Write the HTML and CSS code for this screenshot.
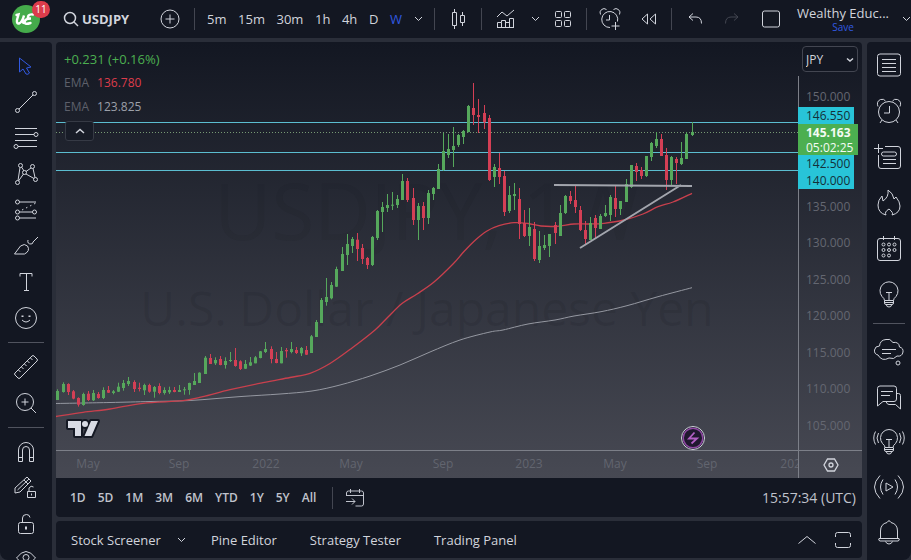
FILE: index.html
```html
<!DOCTYPE html>
<html lang="en">
<head>
<meta charset="utf-8">
<title>USDJPY</title>
<link rel="stylesheet" href="styles.css">
</head>
<body>
<header class="topbar">
  <button class="logo" aria-label="Account">
    <svg width="52" height="38" viewBox="0 0 52 38"><circle cx="26" cy="19" r="14" fill="#45ab4b"/><path d="M16.500 15l2-.5-1.500 5.500q-.5 4 2 3.500 3-1 5-8l-1.500 5q0 3 2.500 2.500M33 14.500q-4-.5-5 2-1 2 3 2-6 0-6.500 3.500 0 3 6 1" fill="none" stroke="#fff" stroke-width="2.400" stroke-linecap="round"/></svg>
    <span class="badge">11</span>
  </button>
  <button class="symbol"><svg width="16" height="16" viewBox="0 0 16 16"><circle cx="7" cy="7" r="5.5"/><path d="M11 11l4 4"/></svg>USDJPY</button>
  <button class="w48" aria-label="Compare"><svg width="20" height="20" viewBox="0 0 20 20"><circle cx="10" cy="10" r="9"/><path d="M10 5.500v9M5.500 10h9"/></svg></button>
  <span class="vsep"></span>
  <nav class="frames">
    <button>5m</button><button>15m</button><button>30m</button><button>1h</button><button>4h</button><button>D</button><button class="on">W</button>
  </nav>
  <button class="w32" aria-label="More intervals"><svg width="9" height="6" viewBox="0 0 9 6"><path d="M1 1l3.500 3.500L8 1"/></svg></button>
  <span class="vsep"></span>
  <button class="w46" aria-label="Chart style"><svg width="16" height="22" viewBox="0 0 16 22"><path d="M2.500 4.500h4v13h-4zM4.500 1v3.500M4.500 17.500V21M10.500 7.500h4v7h-4zM12.500 4v3.500M12.500 14.500V18"/></svg></button>
  <span class="vsep"></span>
  <button class="w48" aria-label="Indicators"><svg width="20" height="20" viewBox="0 0 20 20"><path d="M1 8l5-5 5 4 7-6M1.500 18.500v-5h4v5m0-5v-2h4v7m0-5h4m0-4h4v9.500M13.500 18.500v-9M1 18.500h17"/></svg></button>
  <button class="w10" aria-label="Indicator templates"><svg width="9" height="6" viewBox="0 0 9 6"><path d="M1 1l3.500 3.500L8 1"/></svg></button>
  <button class="w46" aria-label="Layouts"><svg width="18" height="18" viewBox="0 0 18 18"><rect x="1.500" y="1.500" width="6" height="6" rx="1"/><rect x="10.500" y="1.500" width="6" height="6" rx="1"/><rect x="1.500" y="10.500" width="6" height="6" rx="1"/><rect x="10.500" y="10.500" width="6" height="6" rx="1"/></svg></button>
  <span class="vsep"></span>
  <button class="w46" aria-label="Alert"><svg width="22" height="22" viewBox="0 0 22 22"><path d="M11 19.500a8 8 0 1 1 7.500-6M10.500 7v5H7M1.500 6.500a4 4 0 0 1 6-5M14.500 1.500a4 4 0 0 1 6 5M16.500 14v8M12.500 18h8"/></svg></button>
  <button class="w32" aria-label="Replay"><svg width="18" height="14" viewBox="0 0 18 14"><path d="M7.500 2v10L2 7zM15.500 2v10L10 7z"/></svg></button>
  <span class="vsep rewind-end"></span>
  <button class="w46" aria-label="Undo"><svg width="16" height="14" viewBox="0 0 16 14"><path d="M6 1.500L2 5l4 3.500M2 5h7q5.500 0 5.500 6.500"/></svg></button>
  <button class="w28 dim" aria-label="Redo"><svg width="16" height="14" viewBox="0 0 16 14"><path d="M10 1.500L14 5l-4 3.500M14 5H7Q1.500 5 1.500 11.500"/></svg></button>
  <button class="w50" aria-label="Select layout"><svg width="20" height="18" viewBox="0 0 20 18"><rect x="1.500" y="1" width="17" height="16" rx="2"/></svg></button>
  <button class="title"><span class="name">Wealthy Educ...</span><span class="save">Save</span></button>
  <button class="w32" aria-label="Manage layouts"><svg width="9" height="6" viewBox="0 0 9 6"><path d="M1 1l3.500 3.500L8 1"/></svg></button>
</header>

<div class="work">
  <aside class="tools">
    <button class="on" aria-label="Cursor"><svg width="24" height="24" viewBox="0 0 24 24"><path d="M5.500 4v14l3.500-3 3 5q2 1 3.500-1l-3-5 4.500-1z"/></svg></button>
    <button aria-label="Trend line"><svg width="24" height="24" viewBox="0 0 24 24"><circle cx="3.500" cy="20.500" r="2"/><circle cx="20.500" cy="3.500" r="2"/><path d="M5 19L19 5"/></svg></button>
    <button aria-label="Fib retracement"><svg width="26" height="24" viewBox="0 0 26 24"><circle cx="23" cy="8.500" r="2"/><circle cx="3" cy="20.500" r="2"/><path d="M2 2.500h22M2 8.500h19M2 14.500h22M5 20.500h19"/></svg></button>
    <button aria-label="Patterns"><svg width="24" height="24" viewBox="0 0 24 24"><circle cx="6.500" cy="3.500" r="2"/><circle cx="18.500" cy="4.500" r="2"/><circle cx="10.500" cy="10.500" r="2"/><circle cx="3.500" cy="20.500" r="2"/><circle cx="21.500" cy="17.500" r="2"/><path d="M6 5.500L4 18.500M7.500 5L10 9M17 6l-5 3.500M19 6.500l2 9M12 12l8 4.500M9.500 12l-5 7"/></svg></button>
    <button aria-label="Projection"><svg width="24" height="24" viewBox="0 0 24 24"><circle cx="3.500" cy="4" r="2"/><circle cx="3.500" cy="14" r="2"/><circle cx="20.500" cy="14" r="2"/><circle cx="3.500" cy="20" r="2"/><path d="M5.500 4H22M5.500 14h13M5.500 20H22"/><path d="M8 12L22 5" stroke-dasharray="1.500 3"/></svg></button>
    <button aria-label="Brush"><svg width="26" height="24" viewBox="0 0 26 24"><path d="M1.500 20l6-8q4-3 7 0 3 5-3 8zM15 6q-1 4 3 4 2 0 2-2l5-5"/></svg></button>
    <button aria-label="Text"><svg width="24" height="24" viewBox="0 0 24 24"><path d="M6 6.500v-3h12v3M12.500 3.500v17M10 20.500h5"/></svg></button>
    <button aria-label="Emoji"><svg width="24" height="24" viewBox="0 0 24 24"><circle cx="12" cy="12" r="10.500"/><path d="M8 14q4 4 8 0"/><path d="M8.500 9.500v1.500M15.500 9.500v1.500" stroke-width="2"/></svg></button>
    <hr>
    <button aria-label="Measure"><svg width="26" height="26" viewBox="0 0 26 26"><path d="M2 19L19 2q1-1 2 0l3 3q1 1 0 2L7 24q-1 1-2 0l-3-3q-1-1 0-2zM5.500 16l2 2M8.500 13l2 2M11.500 10l2 2M14.500 7l2 2M17.500 4l2 2"/></svg></button>
    <button aria-label="Zoom in"><svg width="24" height="24" viewBox="0 0 24 24"><circle cx="11" cy="11" r="8.500"/><path d="M17 17l5 5M11 7.500v7M7.500 11h7"/></svg></button>
    <hr>
    <button aria-label="Magnet"><svg width="24" height="24" viewBox="0 0 24 24"><path d="M4.500 21.500V10a7.500 7.500 0 0 1 15 0v11.500h-4V10a3.500 3.500 0 0 0-7 0v11.500zM4.500 17.500h4M15.500 17.500h4"/></svg></button>
    <button aria-label="Keep drawing"><svg width="26" height="26" viewBox="0 0 26 26"><path d="M2 13L14 2l4 4L7 17l-5 1zM4.500 15L16 4M11 5l4 4M14.500 16.500h8v6h-8zM16 16v-3q2-3 4.500-1M18.500 18.500v2"/></svg></button>
    <button aria-label="Lock drawings"><svg width="24" height="24" viewBox="0 0 24 24"><rect x="4.500" y="10.500" width="15" height="11" rx="2"/><path d="M8.500 10.500V6q0-3.500 4-3.500 3 0 3.500 3"/><path d="M12 14.500v3" stroke-width="2"/></svg></button>
    <button aria-label="Hide drawings"><svg width="24" height="24" viewBox="0 0 24 24"><path d="M2.500 10Q12-3 21.500 10 12 22 2.500 10z"/><circle cx="12" cy="9.500" r="3"/></svg></button>
  </aside>

  <main class="center">
    <section class="chart">
      <div class="plot">
        <div class="watermark"><span class="wm-symbol">USDJPY, 1W</span><span class="wm-name">U.S. Dollar / Japanese Yen</span></div>
        <svg class="canvas" viewBox="56 42 742 408" preserveAspectRatio="none">
          <g stroke="#5bbdd0"><path d="M56 122.500H798M56 152.500H798M56 170.500H798"/></g>
          <path d="M56 132.500H798" stroke="#769873" stroke-dasharray="1 2"/>
          <path id="slow" stroke="#9598a1" fill="none"/>
          <path id="fast" stroke="#c9404d" stroke-width="1.300" fill="none"/>
          <g id="candles"></g>
          <path d="M554 185l138 1M580 248l101-63" stroke="#a2a5ad" stroke-width="2"/>
        </svg>
        <div class="legend">
          <div class="change">+0.231 (+0.16%)</div>
          <div><span class="ema">EMA</span><span class="red">136.780</span></div>
          <div><span class="ema">EMA</span><span class="gray">123.825</span></div>
          <button class="collapse" aria-label="Collapse legend"><svg width="10" height="6" viewBox="0 0 10 6"><path d="M1 5l4-3.500L9 5" stroke-width="1.500"/></svg></button>
        </div>
        <svg class="mark" width="34" height="22" viewBox="0 0 34 22"><g stroke="#151924" stroke-width="4" stroke-linejoin="round" fill="#151924"><path d="M2 2h13v15H9V9H2zM25 2h7l-6.500 15h-7z"/><circle cx="19" cy="5" r="3"/></g><path d="M2 2h13v15H9V9H2zM25 2h7l-6.500 15h-7z" fill="#d8dbe4"/><circle cx="19" cy="5" r="3" fill="#d8dbe4"/></svg>
        <svg class="event" width="24" height="24" viewBox="0 0 24 24"><circle cx="12" cy="12" r="11.500" fill="#171b27"/><circle cx="12" cy="12" r="9.800" fill="#20182f" stroke="#8e48a2" stroke-width="1.500"/><path d="M13.500 6.500L8 12.500h8l-5.500 5" fill="none" stroke="#b25fc4" stroke-width="1.800"/></svg>
      </div>
      <div class="axis" id="prices">
        <select class="currency" aria-label="Currency"><option>JPY</option></select>
        <svg class="select-arrow" width="8" height="6" viewBox="0 0 8 6"><path d="M1 1.500l3 2.500 3-2.500" stroke-width="1.500"/></svg>
        <div class="tags">
          <span>146.550</span>
          <span class="last"><b>145.163</b>05:02:25</span>
          <span>142.500</span>
          <span>140.000</span>
        </div>
      </div>
      <div class="times" id="times"></div>
      <button class="gear" aria-label="Chart settings"><svg width="16" height="14" viewBox="0 0 16 14"><path d="M4.500 1h7L15 7l-3.500 6h-7L1 7z"/><circle cx="8" cy="7" r="2"/></svg></button>
    </section>

    <section class="ranges">
      <button>1D</button><button>5D</button><button>1M</button><button>3M</button><button>6M</button><button>YTD</button><button>1Y</button><button>5Y</button><button>All</button>
      <span class="vsep"></span>
      <button aria-label="Go to date"><svg width="20" height="20" viewBox="0 0 20 20"><path d="M1.500 8V5q0-2 2-2h13q2 0 2 2v11q0 2-2 2h-6M1.500 7.500h17M5.500 1v4M14.500 1v4M1 13.500h9M7 10.500l3 3-3 3"/></svg></button>
      <span class="clock">15:57:34 (UTC)</span>
    </section>

    <footer class="tabs">
      <button class="screener">Stock Screener<svg width="9" height="6" viewBox="0 0 9 6"><path d="M1 1l3.500 3.500L8 1"/></svg></button>
      <button>Pine Editor</button><button>Strategy Tester</button><button>Trading Panel</button>
      <button class="push" aria-label="Expand panel"><svg width="20" height="10" viewBox="0 0 20 10"><path d="M1.500 8.500L10 1.500l8.500 7"/></svg></button>
      <button aria-label="Maximize panel"><svg width="18" height="18" viewBox="0 0 18 18"><path d="M1.500 6V3.500q0-2 2-2h11q2 0 2 2V6M1.500 12v2.500q0 2 2 2h11q2 0 2-2V12"/></svg></button>
    </footer>
  </main>

  <aside class="side">
    <button aria-label="Watchlist"><svg width="26" height="26" viewBox="0 0 26 26"><rect x="1.500" y="2" width="23" height="22" rx="2.500"/><path d="M6 7.500h14M6 11.500h14M6 15.500h14M6 19.500h14"/></svg></button>
    <button aria-label="Alerts"><svg width="28" height="28" viewBox="0 0 28 28"><circle cx="14" cy="15" r="10.500"/><path d="M14.500 9v7H9M3 9.500q-2-5 2.500-7Q9 1.500 10.500 4M25 9.500q2-5-2.500-7Q19 1.500 17.500 4M7 23l-2 3M21 23l2 3"/></svg></button>
    <button class="shift" aria-label="Data window"><svg width="30" height="30" viewBox="0 0 30 30"><path d="M5.500 2v9M1 6.500h9M12 4.500h13q2.500 0 2.500 2.500v17q0 2.500-2.500 2.500H8q-2.500 0-2.500-2.500V13M10 17.500h13M10 21.500h13"/><rect x="8.500" y="10" width="15" height="4" rx="2"/></svg></button>
    <button aria-label="Hotlists"><svg width="26" height="28" viewBox="0 0 26 28"><path d="M10 26Q2 24 2 16q0-5 4-9l1 5q6-4 5-11 5 3 6 9l2-2q4 5 4 9 0 7-8 9 2-2-3-6-5 3-3 6z"/></svg></button>
    <button aria-label="Calendar"><svg width="26" height="28" viewBox="0 0 26 28"><rect x="1.500" y="3.500" width="23" height="22" rx="2.500"/><path d="M7.500 1v4M18.500 1v4"/><g><circle cx="7.500" cy="9.500" r="1.500"/><circle cx="13" cy="9.500" r="1.500"/><circle cx="18.500" cy="9.500" r="1.500"/><circle cx="7.500" cy="15" r="1.500"/><circle cx="13" cy="15" r="1.500"/><circle cx="18.500" cy="15" r="1.500"/><circle cx="7.500" cy="20.500" r="1.500"/><circle cx="13" cy="20.500" r="1.500"/></g></svg></button>
    <button aria-label="Ideas"><svg width="24" height="28" viewBox="0 0 24 28"><path d="M7.500 19.500q0-2-2.500-4a9 9 0 1 1 14 0q-2.500 2-2.500 4zM7.500 19.500V22q0 1.500 1.500 1.500h6q1.500 0 1.500-1.500v-2.500M9.500 24q0 2 2.500 2t2.500-2M9 11.500h6M12 11.500v8M7.500 21.500h9"/></svg></button>
    <hr>
    <div class="social">
      <button aria-label="Minds"><svg width="32" height="30" viewBox="0 0 32 30"><path d="M5 18q-4-1-3.500-5Q2 9 6.500 9 7 3 13 2.500 17 1 20 5.500q6-1 6.500 4.500 4 1 3.500 5-1 5-6 4-3 4-8 2-7 4-11-3zM9 12.500h14M9 16.500h9"/><circle cx="25" cy="26" r="2"/></svg></button>
      <button aria-label="Chats"><svg width="26" height="28" viewBox="0 0 26 28"><path d="M1.500 23V5.500q0-2.500 2.500-2.500h14q2.500 0 2.500 2.500V16q0 2.500-2.500 2.500H7zM21 10.500h1.500q2 0 2 2V26l-5-4.500H13q-2 0-3-3M5 8.500h12M5 12.500h9"/></svg></button>
      <button aria-label="Idea stream"><svg width="32" height="28" viewBox="0 0 32 28"><path d="M12 19.500q0-2-2.500-4a8.500 8.500 0 1 1 13 0q-2.500 2-2.500 4zM11.500 19.500V22q0 1.500 1.500 1.500h6q1.500 0 1.500-1.500v-2.500M13.500 24q0 2 2.500 2t2.500-2M13 11.500h6M16 11.500v8M11.500 21.500h9M5.500 5q-3 5 0 10M2.500 3.500q-3.500 6.500 0 13M26.500 5q3 5 0 10M29.500 3.500q3.500 6.500 0 13"/></svg></button>
      <button aria-label="Streams"><svg width="32" height="28" viewBox="0 0 32 28"><path d="M13 10v8l7-4zM10 6.500q-5 7.500 0 15M7 2.500q-11 11.500 0 23M22 6.500q5 7.500 0 15M25 2.500q11 11.500 0 23"/></svg></button>
      <button aria-label="Notifications"><svg width="24" height="28" viewBox="0 0 24 28"><path d="M3.500 20.500V13q0-7 6.500-8.500 2-3.500 4 0Q20.500 6 20.500 13v7.500M2 20.500h20q1 2-1 2.500H3q-2-.5-1-2.500zM8.500 23.500q1 2.500 3.500 2.500t3.500-2.500"/></svg></button>
    </div>
  </aside>
</div>
<script src="chart.js"></script>
</body>
</html>
```
FILE: styles.css
```css
* { box-sizing: border-box; }
body {
  margin: 0;
  height: 100vh;
  overflow: hidden;
  display: flex;
  flex-direction: column;
  gap: 4px;
  background: #2a2e39;
  color: #d1d4dc;
  font: 13px/18px "Open Sans", "Noto Sans", sans-serif;
}
button {
  display: flex;
  align-items: center;
  justify-content: center;
  flex: none;
  margin: 0;
  padding: 0;
  border: 0;
  background: none;
  color: inherit;
  font: inherit;
  white-space: nowrap;
}
svg { flex: none; fill: none; stroke: currentColor; overflow: visible; }
hr { flex: none; margin: 6px 8px; border: 0; height: 1px; background: #50535e; }

.topbar, .tools, .side, .ranges, .tabs { background: #131722; }
.topbar { display: flex; align-items: center; height: 38px; flex: none; overflow: hidden; }
.vsep { width: 1px; height: 22px; background: #434651; flex: none; }
.logo { position: relative; width: 52px; height: 38px; }
.logo svg { stroke: none; }
.badge {
  position: absolute; left: 32px; top: 1px;
  width: 18px; height: 17px; border-radius: 9px;
  background: #dd3c4b; color: #fff; font-size: 10px; line-height: 17px;
}
.symbol { width: 94px; padding-left: 11px; gap: 3px; justify-content: flex-start; font-weight: 700; }
.symbol svg { stroke-width: 1.5; }
.w10 { width: 10px; }
.w28 { width: 28px; }
.w32 { width: 32px; }
.w46 { width: 46px; }
.w48 { width: 48px; }
.w50 { width: 50px; }
.frames { display: flex; justify-content: space-between; width: 207px; padding-left: 12px; flex: none; font-weight: 500; }
.on { color: #3159e0; }
.dim { color: #434651; }
.title { flex-direction: column; align-items: center; width: 94px; }
.name { line-height: 18px; }
.save { font-size: 10px; line-height: 14px; margin-top: -2px; color: #3159e0; }
.rewind-end { margin-left: 6px; }

.work { display: grid; grid-template-columns: 52px minmax(0, 1fr) 44px; column-gap: 4px; flex: 1; min-height: 0; }
.tools { display: flex; flex-direction: column; padding-top: 6px; overflow: hidden; border-radius: 0 4px 0 8px; }
.tools button { height: 36px; }
.side { display: flex; flex-direction: column; overflow: hidden; border-radius: 4px 0 8px 0; }
.side button { height: 46px; }
.side hr { margin: 5px 6px; }
.side .social button { width: 100%; height: 45px; }
.side .shift { padding-right: 3px; }

.center { display: flex; flex-direction: column; min-width: 0; min-height: 0; padding-right: 1px; }
.chart {
  flex: 1; min-height: 0;
  display: grid;
  grid-template-columns: minmax(0, 1fr) 64px;
  grid-template-rows: minmax(0, 1fr) 28px;
  background: linear-gradient(#131722, #474953);
  border-radius: 4px 4px 0 0;
  overflow: hidden;
}
.plot, .axis { position: relative; overflow: hidden; }
.canvas { position: absolute; inset: 0; width: 100%; height: 100%; }
.watermark {
  position: absolute; inset: 0;
  display: flex; flex-direction: column; align-items: center; justify-content: center;
  color: rgba(10, 12, 20, .1);
  white-space: nowrap;
}
.wm-symbol { font-size: 78px; line-height: 124px; color: rgba(10, 12, 20, .06); }
.wm-name { font-size: 48px; line-height: 72px; }
.legend { position: absolute; left: 8px; top: 5px; font-size: 12px; line-height: 24px; }
.change { color: #4caf50; font-size: 13px; }
.ema { color: #5d606b; margin-right: 8px; }
.red { color: #dd3c4b; }
.gray { color: #9da0a9; }
.collapse { width: 29px; height: 20px; margin: 2px 0 0 1px; border: 1px solid #363a45; border-radius: 3px; background: #181c27; }
.mark { position: absolute; left: 10px; bottom: 9px; stroke: none; }
.event { position: absolute; left: 85.8%; bottom: 0; transform: translateX(-50%); }

.axis { font-size: 12px; line-height: 16px; }
.axis::before { content: ""; position: absolute; left: 0; top: 34px; bottom: 0; width: 1px; background: #7c7f88; }
.currency {
  position: absolute; left: 4px; top: 4px; width: 56px; height: 26px;
  appearance: none; background: #131722; color: #d1d4dc;
  border: 1px solid #434651; border-radius: 4px; padding: 0 3px;
  font: 12px "Open Sans", "Noto Sans", sans-serif;
}
.select-arrow { position: absolute; right: 8px; top: 15px; }
.price { position: absolute; left: 8px; transform: translateY(-50%); color: #646771; }
.tags { position: absolute; left: 0; top: 65px; display: flex; flex-direction: column; align-items: flex-start; color: #143039; }
.tags span { width: 56px; padding-left: 8px; line-height: 17px; background: #28c4d8; }
.tags .last { width: 60px; background: #4caf50; color: #f4fbf4; line-height: 15px; padding: 1px 0 0 8px; }
.last b { display: block; }

.times { position: relative; overflow: hidden; border-top: 1px solid #7c7f88; border-right: 1px solid #7c7f88; margin-right: -1px; }
.time { position: absolute; top: 5px; transform: translateX(-50%); font-size: 12px; line-height: 16px; color: #62656f; }
.gear { border-top: 1px solid #7c7f88; padding-left: 2px; }
.gear svg { stroke-width: 1.3; }

.ranges {
  display: flex; align-items: center; gap: 12px; height: 39px; flex: none;
  padding: 0 6px 0 14px; margin-bottom: 4px; border-radius: 0 0 4px 4px;
  font-size: 12px; font-weight: 600; color: #c0c3cc;
}
.ranges .vsep { margin-left: 4px; }
.clock { margin-left: auto; font-size: 14px; font-weight: 500; }
.tabs {
  display: flex; align-items: center; gap: 33px; height: 37px; flex: none;
  padding: 0 10px 0 15px; margin-bottom: 2px; border-radius: 4px; font-weight: 500;
}
.screener { gap: 16px; margin-right: -8px; }
.push { margin-left: auto; margin-right: -16px; }
```
FILE: chart.js
```js
const UP = "#56a85c", DOWN = "#d43f55";
// Each bar: x, high, low, body top, body bottom, direction (1 up, 0 down), in thirds of a unit from the origin.
const segments = [
  { origin: [50, 220], bars: [
    [22,508,540,513,540,1],[40,487,518,492,516,1],[55,490,525,492,516,0],[70,510,538,514,536,0],[85,532,560,534,554,0],
    [100,518,557,522,555,1],[115,513,543,521,540,0],[130,510,543,519,541,1],[145,516,536,522,534,0],[160,502,537,510,534,1],
    [175,498,519,510,518,0],[190,510,523,514,519,1],[205,488,516,500,515,1],[220,480,512,489,504,1],[235,471,498,483,492,1],
    [253,481,516,486,507,0],[268,488,514,503,507,0],[283,491,525,495,511,1],[298,491,518,495,515,0],[313,498,533,501,515,1],
    [328,490,523,498,519,0],[343,502,524,510,519,1],[358,500,522,510,517,1],[373,501,517,510,516,0],[388,495,516,510,516,1],
    [403,501,524,508,511,1],[418,488,524,489,510,1],[433,459,495,483,495,1],[448,457,489,458,489,1],[466,408,462,413,462,1],
    [481,402,432,414,432,0],[496,412,435,420,430,1],[511,408,436,417,435,0],[526,412,446,423,435,1],[541,396,426,420,423,1],
    [556,384,440,420,438,0],[571,421,450,424,447,0],[586,420,447,432,446,1],[601,411,438,427,437,1],[616,408,430,412,430,1],
    [631,393,415,394,414,1],[646,366,399,387,396,1],[664,379,430,387,417,0],[679,396,430,417,429,0],[694,381,430,393,430,1],
    [709,384,413,390,394,0],[724,366,400,387,396,1],[739,381,402,390,399,0],[754,381,408,384,400,1],[769,378,405,390,404,0],
    [784,345,399,349,399,1],[799,300,351,306,351,1],[814,234,309,240,309,1],[829,174,257,231,246,1],[844,186,238,195,235,1],
    [859,140,201,147,200,1]] },
  { origin: [310, 70], bars: [
    [97,531,603,552,603,1],[112,492,585,522,555,1],[127,501,549,507,528,1],[142,489,573,509,537,0],[157,522,582,534,567,0],
    [172,561,597,564,585,0],[187,498,588,501,585,1],[202,420,510,423,504,1],[217,396,486,411,426,1],[232,372,426,405,414,1],
    [247,366,420,404,407,1],[262,375,414,387,405,1],[277,312,390,333,390,1],[292,324,396,333,390,0],[310,354,465,384,450,0],
    [325,399,510,408,450,1],[340,396,480,408,444,0],[355,360,462,369,444,1],[370,351,390,354,372,1],[385,282,357,297,357,1],
    [400,189,302,243,300,1],[415,192,264,237,255,1],[430,171,291,228,240,1],[445,192,231,195,225,1],[460,180,222,183,201,1],
    [475,105,187,108,186,1],[490,39,165,114,135,0],[505,87,189,135,141,0],[523,105,177,129,157,0],[538,135,333,144,330,0],
    [553,282,351,291,321,1],[568,249,342,294,321,0],[583,303,438,318,426,0],[598,348,429,375,423,1],[613,339,420,372,378,1],
    [628,354,507,387,462,0],[643,420,501,459,498,0],[658,414,528,471,498,1],[673,456,573,477,567,0],[688,483,579,528,570,1],
    [703,495,540,525,534,1],[718,492,561,492,528,1],[736,456,522,465,489,0]] },
  { origin: [520, 110], bars: [
    [121,285,378,309,378,1],[136,255,312,258,309,1],[151,243,282,258,273,0],[166,225,309,270,291,0],[181,288,363,300,360,0],
    [196,333,405,360,387,0],[211,321,390,339,390,1],[226,315,384,324,354,0],[241,312,357,318,357,1],[256,285,321,309,318,1],
    [271,255,333,261,315,1],[286,228,321,264,297,0],[301,273,315,273,297,1],[319,207,276,222,276,1],[334,165,234,165,231,1],
    [349,159,213,168,186,0],[364,171,207,180,198,0],[379,138,201,138,198,1],[394,96,153,99,141,1],[409,66,114,87,108,1],
    [424,72,138,87,138,0],[439,114,240,135,210,0],[454,138,225,141,210,1],[469,141,222,147,159,0],[484,96,165,144,162,1],
    [499,66,147,72,147,1],[517,36,78,66,75,1]] }
];
document.getElementById("candles").innerHTML = segments.map(({ origin: [ox, oy], bars }) =>
  bars.map(([x, hi, lo, top, bottom, up]) => {
    const cx = Math.floor(ox + x / 3);
    const y = v => (oy + v / 3).toFixed(1);
    const h = (a, b) => ((b - a) / 3).toFixed(1);
    return `<g fill="${up ? UP : DOWN}" stroke="none"><rect x="${cx}" y="${y(hi)}" width="1" height="${h(hi, lo)}"/>` +
      `<rect x="${cx - 1}" y="${y(top)}" width="3" height="${h(top, bottom)}"/></g>`;
  }).join("")).join("");

// Moving averages: smooth curves through their sampled points.
function curve(points) {
  let d = `M${points[0]}`;
  for (let i = 0; i < points.length - 1; i++) {
    const a = points[i - 1] || points[i], b = points[i], c = points[i + 1], e = points[i + 2] || c;
    d += `C${b[0] + (c[0] - a[0]) / 6} ${b[1] + (c[1] - a[1]) / 6} ${c[0] - (e[0] - b[0]) / 6} ${c[1] - (e[1] - b[1]) / 6} ${c[0]} ${c[1]}`;
  }
  return d;
}
document.getElementById("slow").setAttribute("d", curve([
  [56,403.5],[110,402.5],[150,401.5],[190,400.5],[240,396.6],[280,394],[312,391],[340,385],[370,376],[400,365],[430,352],
  [460,340],[490,332],[503,330],[528,324],[555,320],[574,316],[601,311.7],[627,305.7],[658,296.7],[692,287.7]]));
document.getElementById("fast").setAttribute("d", curve([
  [56,416.5],[83,412.3],[110,409],[143,403.3],[183,400.7],[203,396.7],[230,389.7],[263,382.7],[290,377.5],[310,373.3],
  [330,363.5],[352,348],[375,330],[388,317],[402,303.5],[417,294],[434,282],[453,264],[464,251.500],[476,239.5],[487,231],
  [499,225.7],[514,222.7],[528,223.5],[541,226],[557,226.3],[574,224],[589,224],[604,223.3],[624,220],[643,214],[658,206.7],
  [673,202],[692,193.3]]));

// Price axis: 150.000 sits at 55 of 408, and five yen span 36.5.
const prices = document.getElementById("prices");
for (const p of [150, 135, 130, 125, 120, 115, 110, 105]) {
  const el = document.createElement("span");
  el.className = "price";
  el.textContent = p.toFixed(3);
  el.style.top = (55 + (150 - p) / 5 * 36.55) / 408 * 100 + "%";
  prices.append(el);
}

const times = document.getElementById("times");
const labels = [["May", 32], ["Sep", 123], ["2022", 210], ["May", 295], ["Sep", 387], ["2023", 473], ["May", 559], ["Sep", 651], ["2024", 738]];
for (const [text, x] of labels) {
  const el = document.createElement("span");
  el.className = "time";
  el.textContent = text;
  el.style.left = x / 742 * 100 + "%";
  times.append(el);
}
```
